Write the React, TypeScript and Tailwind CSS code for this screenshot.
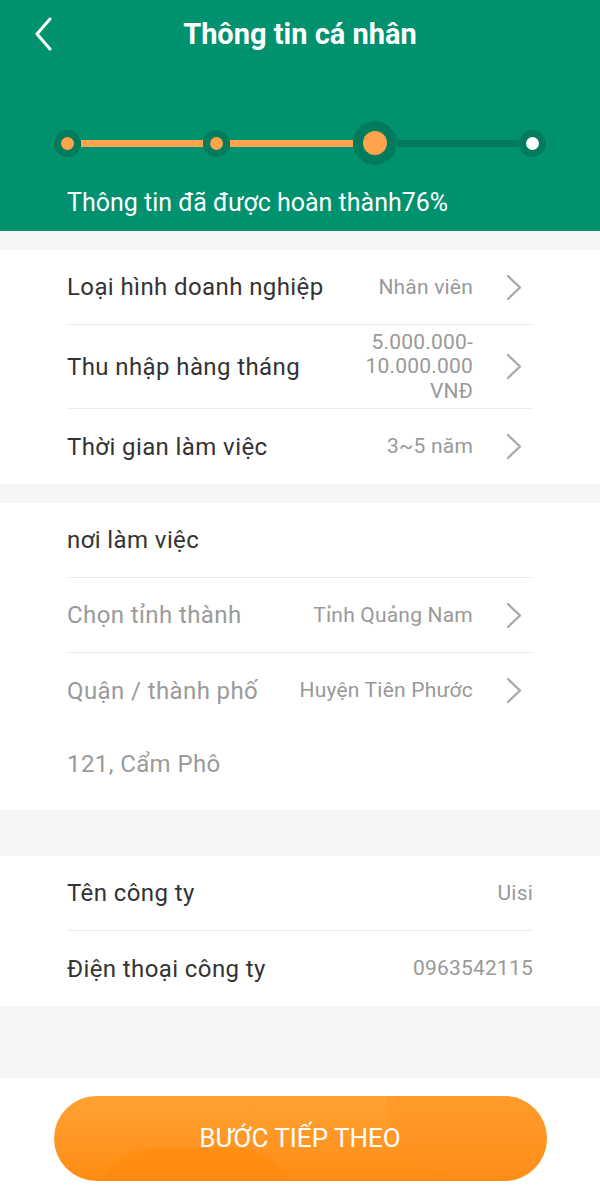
type Row = { label: string; value?: string[]; arrow?: boolean; muted?: boolean };

const sectionOne: Row[] = [
  { label: "Loại hình doanh nghiệp", value: ["Nhân viên"], arrow: true },
  { label: "Thu nhập hàng tháng", value: ["5.000.000-", "10.000.000", "VNĐ"], arrow: true },
  { label: "Thời gian làm việc", value: ["3~5 năm"], arrow: true },
];

const sectionTwo: Row[] = [
  { label: "nơi làm việc" },
  { label: "Chọn tỉnh thành", value: ["Tỉnh Quảng Nam"], arrow: true, muted: true },
];

const sectionThree: Row[] = [
  { label: "Tên công ty", value: ["Uisi"] },
  { label: "Điện thoại công ty", value: ["0963542115"] },
];

function Arrow() {
  return (
    <svg width="17" height="27" viewBox="0 0 17 27" className="ml-[33px] mr-[10px] shrink-0" fill="none">
      <path d="M2 2 L14 13.5 L2 25" stroke="#aaaaaa" strokeWidth="2.4" strokeLinecap="round" strokeLinejoin="round" />
    </svg>
  );
}

function InfoRow({ row, last }: { row: Row; last?: boolean }) {
  const tall = (row.value?.length ?? 0) > 1;
  return (
    <div
      className={`flex items-center ${tall ? "h-[84px]" : "h-[75px]"} ${
        last ? "" : "border-b border-[#ececec]"
      }`}
    >
      <span
        className={`text-[24px] tracking-[0.4px] ${
          row.muted ? "text-[#9a9a9a]" : "text-[#333]"
        } whitespace-nowrap`}
      >
        {row.label}
      </span>
      <div className="flex-1 flex items-center justify-end">
        {row.value && (
          <div className="text-right text-[21px] tracking-[0.2px] leading-[24.5px] text-[#999]">
            {row.value.map((v) => (
              <div key={v}>{v}</div>
            ))}
          </div>
        )}
        {row.arrow ? <Arrow /> : null}
      </div>
    </div>
  );
}

function Dot({ big, white }: { big?: boolean; white?: boolean }) {
  return (
    <div
      className={`rounded-full bg-[#007b5b] flex items-center justify-center shrink-0 ${
        big ? "w-[44px] h-[44px]" : "w-[27px] h-[27px]"
      }`}
    >
      <div
        className={`rounded-full ${white ? "bg-white" : "bg-[#ffa34d]"} ${
          big ? "w-[24px] h-[24px]" : "w-[13px] h-[13px]"
        }`}
      />
    </div>
  );
}

export default function App() {
  return (
    <div className="w-[600px] h-[1193px] bg-[#f6f6f9] flex flex-col font-['Roboto',sans-serif]">
      {/* Header */}
      <div className="bg-[#00926f] h-[231px] shrink-0 flex flex-col">
        <div className="relative h-[70px] flex items-center justify-center">
          <svg width="20" height="34" viewBox="0 0 20 34" fill="none" className="absolute left-[34px] top-[17px]">
            <path d="M16 2 L3 17 L16 32" stroke="white" strokeWidth="3" strokeLinecap="round" strokeLinejoin="round" />
          </svg>
          <h1 className="text-white text-[29px] font-bold">Thông tin cá nhân</h1>
        </div>
        <div className="flex items-center px-[54px] mt-[51px]">
          <Dot />
          <div className="flex-1 h-[7px] bg-[#ffa34d]" />
          <Dot />
          <div className="flex-1 h-[7px] bg-[#ffa34d]" />
          <Dot big />
          <div className="flex-1 h-[7px] bg-[#007b5b]" />
          <Dot white />
        </div>
        <p className="text-white text-[25px] pl-[67px] mt-[19px]">Thông tin đã được hoàn thành76%</p>
      </div>

      {/* Section 1 */}
      <div className="bg-white mt-[19px] px-[67px]">
        {sectionOne.map((r, i) => (
          <InfoRow key={r.label} row={r} last={i === sectionOne.length - 1} />
        ))}
      </div>

      {/* Section 2 */}
      <div className="bg-white mt-[19px] px-[67px] pb-[10px]">
        {sectionTwo.map((r) => (
          <InfoRow key={r.label} row={r} />
        ))}
        <InfoRow row={{ label: "Quận / thành phố", value: ["Huyện Tiên Phước"], arrow: true, muted: true }} last />
        <div className="flex items-center h-[72px]">
          <span className="text-[24px] tracking-[0.4px] text-[#9a9a9a]">121, Cẩm Phô</span>
        </div>
      </div>

      {/* Section 3 */}
      <div className="bg-white mt-[46px] px-[67px]">
        {sectionThree.map((r, i) => (
          <InfoRow key={r.label} row={r} last={i === sectionThree.length - 1} />
        ))}
      </div>

      <div className="flex-1" />

      {/* Footer */}
      <div className="bg-white h-[115px] shrink-0 flex justify-center pt-[18px]">
        <button className="relative overflow-hidden w-[493px] h-[85px] rounded-full bg-gradient-to-b from-[#ffa232] to-[#ff8c12] text-white text-[26px] font-normal">
          <span className="absolute -right-[40px] -top-[70px] w-[200px] h-[150px] rounded-full bg-[#ff9020] opacity-40" />
          <span className="absolute left-[40px] top-[52px] w-[200px] h-[120px] rounded-full bg-[#ff8a08] opacity-50" />
          <span className="relative">BƯỚC TIẾP THEO</span>
        </button>
      </div>
    </div>
  );
}
